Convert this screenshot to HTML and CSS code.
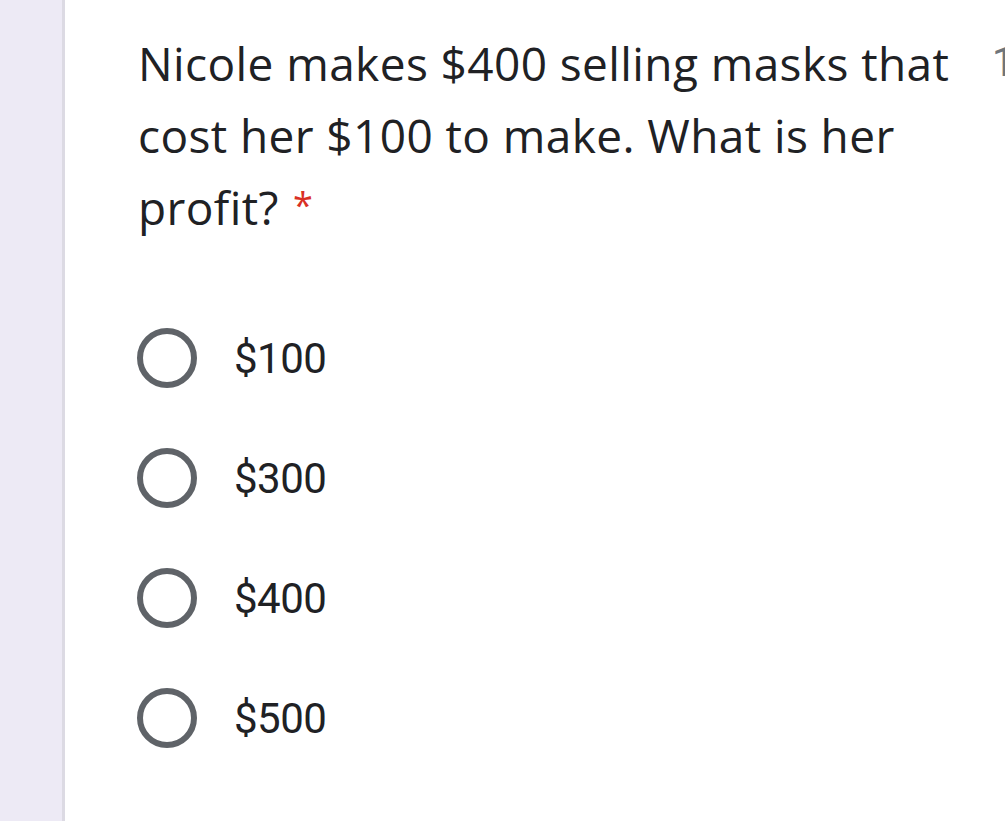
FILE: index.html
```html
<!DOCTYPE html>
<html>
<head>
<meta charset="utf-8">
<link rel="stylesheet" href="styles.css">
</head>
<body>
<div class="page">
  <div class="side"></div>
  <div class="card">
    <div class="head">
      <div class="title">Nicole makes $400 selling masks that cost her $100 to make. What is her profit? <span class="req">*</span></div>
      <div class="points">1 point</div>
    </div>
    <div class="options">
      <div class="opt"><span class="radio"></span><span class="label">$100</span></div>
      <div class="opt"><span class="radio"></span><span class="label">$300</span></div>
      <div class="opt"><span class="radio"></span><span class="label">$400</span></div>
      <div class="opt"><span class="radio"></span><span class="label">$500</span></div>
    </div>
  </div>
</div>
</body>
</html>
```
FILE: styles.css
```css
html, body { margin: 0; padding: 0; background: #fff; }
.page { display: flex; width: 1005px; height: 821px; overflow: hidden; }
.side { width: 62px; flex: none; background: #edeaf5; border-right: 3px solid #dcdae3; }
.card { flex: 1; padding: 27px 0 0 73px; overflow: hidden; }
.head { display: flex; gap: 32px; width: 1000px; }
.title { width: 822px; flex: none; font-family: "Open Sans", sans-serif; font-size: 46px; line-height: 72px; color: #202124; letter-spacing: 0.4px; }
.req { color: #d93025; margin-left: 2px; font-size: 36px; position: relative; top: -7px; }
.points { flex: none; font-family: Roboto, sans-serif; font-size: 40px; line-height: 72px; color: #70757a; }
.options { margin-top: 80px; display: flex; flex-direction: column; gap: 60px; }
.opt { display: flex; align-items: center; height: 60px; }
.radio { width: 48px; height: 48px; border: 6px solid #5f6368; border-radius: 50%; flex: none; margin-left: -1px; }
.label { margin-left: 37px; font-family: Roboto, sans-serif; font-size: 42px; color: #202124; letter-spacing: -0.5px; }
```
